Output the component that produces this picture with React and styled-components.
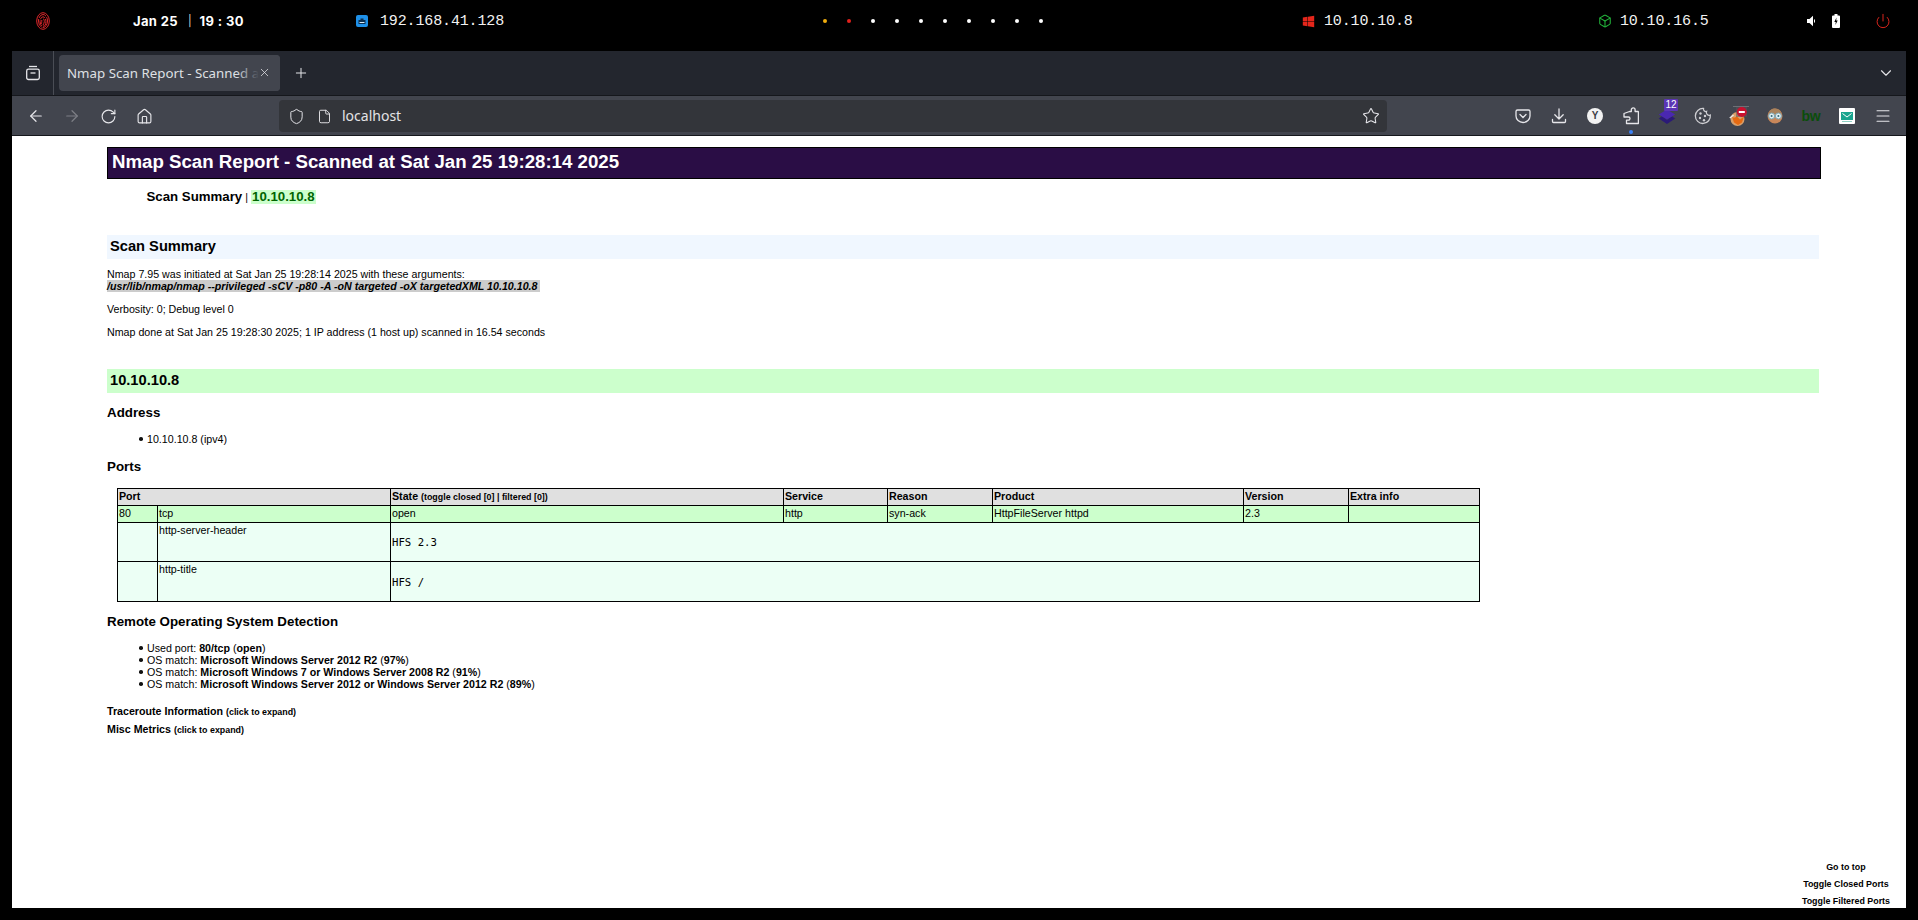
import React from "react";
import styled, { createGlobalStyle } from "styled-components";
import { ArrowLeft, ArrowRight, RotateCw, House, Shield, File, Star, Menu, ChevronDown, Plus, X, Box, Power } from "lucide-react";
import { FaWindows } from "react-icons/fa";

const Global = createGlobalStyle`
  html, body { margin: 0; padding: 0; background: #000; overflow: hidden; }
  * { box-sizing: border-box; }
`;

const Screen = styled.div`
  width: 1918px; height: 920px; background: #000; display: flex; flex-direction: column; overflow: hidden;
`;
const TopBar = styled.header`
  height: 51px; flex: none; display: flex; align-items: center; padding-bottom: 9px; color: #fff;
`;
const Segment = styled.div`
  flex: none; width: ${p => p.$w}px; display: flex; align-items: center; gap: ${p => p.$gap ?? 0}px; padding-left: ${p => p.$pl ?? 0}px;
`;
const DateText = styled.span`
  font: 700 13px/16px Inter, "Liberation Sans", sans-serif; letter-spacing: .35px; white-space: pre;
`;
const DateSep = styled.span`
  font: 400 11px/16px Inter, "Liberation Sans", sans-serif; margin: 0 8px 0 10px; color: #ddd;
`;
const Ip = styled.span`
  font: 400 15px/16px "Liberation Mono", monospace; letter-spacing: -.14px; color: #f2f2f2; padding-top: 1px;
`;
const Dots = styled.div`
  display: flex; gap: 20px; align-items: center;
`;
const Dot = styled.i`
  width: 4px; height: 4px; border-radius: 50%; background: ${p => p.$c || "#fff"}; display: block;
`;
const Window = styled.div`
  margin: 0 12px; height: 857px; display: flex; flex-direction: column; overflow: hidden; position: relative; background: #fff;
`;
const TabBar = styled.div`
  height: 45px; flex: none; background: #23262e; display: flex; align-items: center; color: #e4e4e8; position: relative; border-bottom: 1px solid #15171c;
`;
const SideBtn = styled.div`
  width: 42px; height: 44px; border-right: 1px solid #4a4d55; display: flex; align-items: center; justify-content: center; flex: none;
`;
const Tab = styled.div`
  margin-left: 5px; width: 221px; height: 36px; border-radius: 4px; background: #42454e; display: flex; align-items: center; padding-left: 8px; position: relative; flex: none;
  font: 400 13.3px/16px "Noto Sans", "Open Sans", sans-serif; color: #dfe0e4; overflow: hidden; white-space: nowrap;
`;
const TabFade = styled.span`
  position: absolute; right: 0; top: 0; bottom: 0; width: 44px; background: linear-gradient(90deg, rgba(66,69,78,0), #42454e 52%);
`;
const TabClose = styled.span`
  position: absolute; right: 9px; top: 11px; display: flex;
`;
const NewTab = styled.div`
  margin-left: 13px; display: flex; flex: none;
`;
const Spring = styled.div`flex: 1;`;
const RightChevron = styled.div`
  display: flex; margin-right: 11px;
`;
const NavBar = styled.div`
  height: 40px; flex: none; background: #42454e; display: flex; align-items: center; border-bottom: 1px solid #15171c; padding-top: 1px; color: #e6e6ea;
`;
const NavBtns = styled.div`
  width: 267px; flex: none; padding-left: 6px; display: flex; align-items: center;
`;
const NavBtn = styled.div`
  width: 36px; height: 32px; display: flex; align-items: center; justify-content: center;
`;
const UrlBar = styled.div`
  width: 1108px; flex: none; height: 32px; background: #33353a; border-radius: 4px; display: flex; align-items: center; padding-left: 9px; position: relative;
`;
const UrlText = styled.span`
  font: 400 14px/18px "Noto Sans", "Open Sans", sans-serif; color: #e3e3e6; margin-left: 10px;
`;
const UrlDocIcon = styled.span`
  margin-left: 12px; display: flex;
`;
const UrlStar = styled.span`
  margin-left: auto; margin-right: 7px; display: flex;
`;
const Tools = styled.div`
  margin-left: 118px; display: flex; align-items: center;
`;
const Tool = styled.div`
  width: 36px; height: 32px; flex: none; display: flex; align-items: center; justify-content: center; position: relative;
`;
const ToolBadge = styled.span`
  position: absolute; left: 15px; top: -1px; width: 14px; height: 12px; background: #5b35b5; color: #fff; font: 400 10px/12px "Liberation Sans", sans-serif; text-align: center; border-radius: 1px;
`;
const ToolDot = styled.span`
  position: absolute; left: 16px; bottom: -2px; width: 4px; height: 4px; border-radius: 50%; background: #3b82f6;
`;
const BwText = styled.span`
  font: 700 14px/14px "Liberation Sans", sans-serif; color: #0b4d0b; letter-spacing: -.2px;
`;
const YBadge = styled.span`
  width: 16px; height: 16px; border-radius: 50%; background: #f2f2f2; color: #3a3c44; font: 700 10px/16px "Liberation Sans", sans-serif; text-align: center;
`;

const Page = styled.main`
  flex: 1; background: #fff; padding: 11px 85px 0 95px; color: #000; position: relative; overflow: hidden;
  font: 400 10.67px/12px "Liberation Sans", Arial, sans-serif;
`;
const Title = styled.h1`
  margin: 0; height: 32px; background: #2a0d45; border: 1px solid #000; color: #fff; padding: 0 4px;
  font: 700 18.67px/28px "Liberation Sans", Arial, sans-serif; white-space: nowrap;
`;
const Menu2 = styled.div`
  margin: 11px 0 0 39.5px; padding-bottom: 1px; font: 400 10.67px/14px "Liberation Sans", Arial, sans-serif; display: flex; align-items: baseline; gap: 3px;
`;
const MenuLink = styled.span`
  font-weight: 700; font-size: 13.25px; line-height: 14px;
  ${p => p.$host && `background: #ccffcc; color: #006400; display: inline-block; padding: 0 1px 1px; line-height: 13px;`}
`;
const Bar = styled.h2`
  margin: ${p => p.$mt ?? 30}px 2px 0 0; height: 24px; padding-left: ${p => p.$pl ?? 3}px; background: ${p => p.$bg};
  font: 700 14.67px/23px "Liberation Sans", Arial, sans-serif;
`;
const Para = styled.p`
  margin: ${p => p.$mt ?? 11}px 0 0;
`;
const Args = styled.b`
  background: #ccc; font-style: italic; display: inline-block; padding-right: 2px;
`;
const Sub = styled.h3`
  margin: ${p => p.$mt ?? 12}px 0 0; font: 700 13.33px/16px "Liberation Sans", Arial, sans-serif;
`;
const List = styled.ul`
  margin: 12px 0 0; padding: 0 0 0 40px; line-height: 12px; list-style: none;
`;
const Item = styled.li`
  position: relative;
  &::before { content: ""; position: absolute; left: -8px; top: 4px; width: 3.5px; height: 3.5px; border-radius: 50%; background: #111; }
`;
const PortsTable = styled.table`
  margin: 13px 0 0 10px; border-collapse: collapse; table-layout: fixed; width: 1362px; border: 1px solid #000;
`;
const HeadRow = styled.tr`
  background: #e0e0e0; height: 17px;
`;
const Th = styled.th`
  border: 1px solid #000; text-align: left; padding: 0 1px; vertical-align: top; font: 700 10.67px/14px "Liberation Sans", Arial, sans-serif;
`;
const ThSmall = styled.span`
  font-size: 8.9px;
`;
const Tr = styled.tr`
  background: ${p => p.$bg}; height: ${p => p.$h}px;
`;
const Td = styled.td`
  border: 1px solid #000; padding: 0 1px; vertical-align: ${p => p.$mid ? "middle" : "top"}; font: 400 10.67px/14px "Liberation Sans", Arial, sans-serif;
`;
const Pre = styled.pre`
  margin: 0; font: 400 10.67px/14px "DejaVu Sans Mono", monospace; padding-top: 2px;
`;
const Expand = styled.div`
  margin-top: ${p => p.$mt}px; font: 700 10.67px/14px "Liberation Sans", Arial, sans-serif;
`;
const ExpandHint = styled.span`
  font-size: 8.9px;
`;
const Floating = styled.div`
  position: absolute; right: 16px; bottom: 0; display: flex; flex-direction: column; align-items: center; gap: 3px;
  font: 700 8.9px/14px "Liberation Sans", Arial, sans-serif; background: #fff;
`;

const Fingerprint = () => (
  <svg width="14" height="18" viewBox="0 0 14 18" fill="none" stroke="#e0282c" strokeWidth="1">
    <ellipse cx="7" cy="9" rx="6.300" ry="8.300" />
    <ellipse cx="7" cy="9" rx="4.500" ry="6.500" strokeDasharray="9 1" />
    <ellipse cx="7" cy="9.500" rx="2.900" ry="4.700" strokeDasharray="6 1" />
    <path d="M7 6.500c1 .500 1.300 2 1.300 3S7.800 12 7 13M5.800 8c0 2-.2 3-.5 4" />
  </svg>
);
const EthIcon = () => (
  <svg width="12" height="12" viewBox="0 0 12 12">
    <rect width="12" height="12" rx="2" fill="#1e90e8" />
    <path d="M2.500 9V5h2V3.500h3V5h2v4z" fill="#0d2f4f" />
    <path d="M3.500 7.500h5" stroke="#d8eefc" strokeWidth="1" />
  </svg>
);
const Speaker = () => (
  <svg width="9" height="12" viewBox="0 0 9 12" fill="#fff">
    <path d="M0 4h2.500L6 .800v10.400L2.500 8H0z" />
    <path d="M7 4a2.400 2.400 0 0 1 0 4z" />
  </svg>
);
const Battery = () => (
  <svg width="8" height="14" viewBox="0 0 8 14">
    <path d="M2.500 0h3v1.500H7a1 1 0 0 1 1 1V13a1 1 0 0 1-1 1H1a1 1 0 0 1-1-1V2.500a1 1 0 0 1 1-1h1.500z" fill="#fff" />
    <path d="M4.500 3.500 2.300 8h1.500l-.4 3L5.700 6.500H4.200z" fill="#000" />
  </svg>
);
const ArchiveIcon = () => (
  <svg width="16" height="16" viewBox="0 0 16 16" fill="none" stroke="#e6e6ea" strokeWidth="1.300">
    <path d="M4 1.500h8" />
    <rect x="1.700" y="4.200" width="12.600" height="10.300" rx="1.800" />
    <path d="M5.500 8h5" />
  </svg>
);
const Pocket = () => (
  <svg width="16" height="16" viewBox="0 0 16 16" fill="none" stroke="#e6e6ea" strokeWidth="1.300">
    <path d="M2.500 2h11A1.500 1.500 0 0 1 15 3.500V8a7 6.500 0 0 1-14 0V3.500A1.500 1.500 0 0 1 2.500 2z" />
    <path d="M5 6.500 8 9.500l3-3" strokeLinecap="round" />
  </svg>
);
const DownloadIcon = () => (
  <svg width="16" height="16" viewBox="0 0 16 16" fill="none" stroke="#e6e6ea" strokeWidth="1.300" strokeLinecap="round" strokeLinejoin="round">
    <path d="M8 1v9.500M3.800 6.800 8 11l4.200-4.200" />
    <path d="M1.500 11.500v2a1 1 0 0 0 1 1h11a1 1 0 0 0 1-1v-2" />
  </svg>
);
const Puzzle = () => (
  <svg width="16" height="18" viewBox="0 0 16 18" fill="none" stroke="#e6e6ea" strokeWidth="1.300">
    <path d="M6.500 4.500H8.300V2.800a1.900 1.900 0 0 1 3.800 0v1.700h2.900a.5.500 0 0 1 .4.500v11.500H3.500v-3.300H5.400a1.600 1.600 0 0 0 0-3.200H1V6.500l5.500-2z" strokeLinejoin="round" />
  </svg>
);
const Stack = () => (
  <svg width="18" height="18" viewBox="0 0 18 18">
    <path d="M9 17 .800 11.500 4 9.300l5 3.500 5-3.500 3.200 2.200z" fill="#2b1a78" />
    <path d="M9 12.500.800 7.500 9 2.500l8.200 5z" fill="#4a28b0" />
  </svg>
);
const CookieIcon = () => (
  <svg width="18" height="18" viewBox="0 0 18 18" fill="none" stroke="#cfcfd3" strokeWidth="1.300">
    <path d="M9.500 1.500a2.500 2.500 0 0 0 3 3 2.800 2.800 0 0 0 3.800 3.500A7.500 7.500 0 1 1 9.500 1.500z" />
    <g fill="#cfcfd3" stroke="none">
      <circle cx="6.500" cy="6.500" r="1.200" /><circle cx="11" cy="9" r="1.200" /><circle cx="6" cy="11" r="1.200" /><circle cx="10" cy="13.300" r="1.200" />
    </g>
  </svg>
);
const FoxBlock = () => (
  <svg width="20" height="22" viewBox="0 0 20 22">
    <circle cx="8.500" cy="14" r="7" fill="#d9a06a" />
    <path d="M3 11.500c2 2 3 1 5 0l3 3 4-3-2 6-4 2.500-4-2.500z" fill="#e66a12" />
    <path d="M.800 13 4.500 10" stroke="#e8e8e8" strokeWidth="1.500" />
    <rect x="4" y="1" width="16" height="1" fill="#6d6f75" />
    <rect x="7" y="2" width="11" height="10" fill="#55575c" opacity=".55" />
    <circle cx="12.800" cy="7" r="5" fill="#c8102e" />
    <rect x="9.800" y="6" width="6" height="2" fill="#fff" />
  </svg>
);
const Face = () => (
  <svg width="16" height="16" viewBox="0 0 16 16">
    <circle cx="8" cy="8" r="7.500" fill="#c8875a" />
    <path d="M1.500 6C2 2.500 5 .5 8 .5S14 2.500 14.500 6z" fill="#a9825c" />
    <circle cx="4.600" cy="8" r="3" fill="#dfeef2" stroke="#7fa6b3" />
    <circle cx="11.400" cy="8" r="3" fill="#dfeef2" stroke="#7fa6b3" />
    <circle cx="4.600" cy="8" r="1" fill="#3a6675" />
    <circle cx="11.400" cy="8" r="1" fill="#3a6675" />
  </svg>
);
const MailTile = () => (
  <svg width="16" height="16" viewBox="0 0 16 16">
    <rect width="16" height="16" rx="1" fill="#fff" />
    <rect x="2" y="4" width="12" height="8" fill="#1aa58f" />
    <path d="M3.500 5.500 8 9l4.500-3.500" fill="none" stroke="#fff" strokeWidth="1" />
    <rect x="3" y="13" width="10" height="1" fill="#8fcfc4" />
  </svg>
);

const stroke = 1.6;
const ports = [40, 233, 393, 104, 105, 251, 105, 131];

export default function App() {
  return (
    <Screen>
      <Global />
      <TopBar>
        <Segment $w={133} $pl={36}><Fingerprint /></Segment>
        <Segment $w={223}><DateText>Jan 25</DateText><DateSep>|</DateSep><DateText>19 : 30</DateText></Segment>
        <Segment $w={467} $gap={12}><EthIcon /><Ip>192.168.41.128</Ip></Segment>
        <Segment $w={479}><Dots>{["#f0ad0e", "#e3211c", "", "", "", "", "", "", "", ""].map((c, i) => <Dot key={i} $c={c} />)}</Dots></Segment>
        <Segment $w={296} $gap={9}><FaWindows size={13} color="#e5261b" /><Ip>10.10.10.8</Ip></Segment>
        <Segment $w={209} $gap={8}><Box size={14} color="#22b33a" strokeWidth={1.8} /><Ip>10.10.16.5</Ip></Segment>
        <Segment $w={25}><Speaker /></Segment>
        <Segment $w={43}><Battery /></Segment>
        <Segment $w={20}><Power size={16} color="#d8251c" strokeWidth={1.5} /></Segment>
      </TopBar>
      <Window>
        <TabBar>
          <SideBtn><ArchiveIcon /></SideBtn>
          <Tab>
            Nmap Scan Report - Scanned at
            <TabFade />
            <TabClose><X size={13} color="#e4e4e8" strokeWidth={1.4} /></TabClose>
          </Tab>
          <NewTab><Plus size={16} color="#e4e4e8" strokeWidth={1.5} /></NewTab>
          <Spring />
          <RightChevron><ChevronDown size={18} color="#e4e4e8" strokeWidth={1.5} /></RightChevron>
        </TabBar>
        <NavBar>
          <NavBtns>
            <NavBtn><ArrowLeft size={18} strokeWidth={stroke} /></NavBtn>
            <NavBtn><ArrowRight size={18} strokeWidth={stroke} color="#7d7f86" /></NavBtn>
            <NavBtn><RotateCw size={17} strokeWidth={stroke} /></NavBtn>
            <NavBtn><House size={17} strokeWidth={stroke} /></NavBtn>
          </NavBtns>
          <UrlBar>
            <Shield size={17} strokeWidth={1.4} />
            <UrlDocIcon><File size={15} strokeWidth={1.5} /></UrlDocIcon>
            <UrlText>localhost</UrlText>
            <UrlStar><Star size={18} strokeWidth={1.4} /></UrlStar>
          </UrlBar>
          <Tools>
            <Tool><Pocket /></Tool>
            <Tool><DownloadIcon /></Tool>
            <Tool><YBadge>Y</YBadge></Tool>
            <Tool><Puzzle /><ToolDot /></Tool>
            <Tool><Stack /><ToolBadge>12</ToolBadge></Tool>
            <Tool><CookieIcon /></Tool>
            <Tool><FoxBlock /></Tool>
            <Tool><Face /></Tool>
            <Tool><BwText>bw</BwText></Tool>
            <Tool><MailTile /></Tool>
            <Tool><Menu size={18} strokeWidth={1.4} /></Tool>
          </Tools>
        </NavBar>
        <Page>
          <Title>Nmap Scan Report - Scanned at Sat Jan 25 19:28:14 2025</Title>
          <Menu2><MenuLink>Scan Summary</MenuLink><span>|</span><MenuLink $host>10.10.10.8</MenuLink></Menu2>
          <Bar $bg="#f0f7ff">Scan Summary</Bar>
          <Para $mt={9}>Nmap 7.95 was initiated at Sat Jan 25 19:28:14 2025 with these arguments:<br /><Args>/usr/lib/nmap/nmap --privileged -sCV -p80 -A -oN targeted -oX targetedXML 10.10.10.8</Args></Para>
          <Para>Verbosity: 0; Debug level 0</Para>
          <Para $mt={11}>Nmap done at Sat Jan 25 19:28:30 2025; 1 IP address (1 host up) scanned in 16.54 seconds</Para>
          <Bar $bg="#ccffcc" $mt={31}>10.10.10.8</Bar>
          <Sub>Address</Sub>
          <List><Item>10.10.10.8 (ipv4)</Item></List>
          <Sub $mt={14}>Ports</Sub>
          <PortsTable>
            <colgroup>{ports.map((w, i) => <col key={i} width={w} />)}</colgroup>
            <thead>
              <HeadRow>
                <Th colSpan={2}>Port</Th>
                <Th>State <ThSmall>(toggle closed [0] | filtered [0])</ThSmall></Th>
                <Th>Service</Th><Th>Reason</Th><Th>Product</Th><Th>Version</Th><Th>Extra info</Th>
              </HeadRow>
            </thead>
            <tbody>
              <Tr $bg="#ccffcc" $h={17}>
                <Td>80</Td><Td>tcp</Td><Td>open</Td><Td>http</Td><Td>syn-ack</Td><Td>HttpFileServer httpd</Td><Td>2.3</Td><Td></Td>
              </Tr>
              <Tr $bg="#ecfff5" $h={39}>
                <Td></Td><Td>http-server-header</Td><Td $mid colSpan={6}><Pre>HFS 2.3</Pre></Td>
              </Tr>
              <Tr $bg="#ecfff5" $h={40}>
                <Td></Td><Td>http-title</Td><Td $mid colSpan={6}><Pre>HFS /</Pre></Td>
              </Tr>
            </tbody>
          </PortsTable>
          <Sub>Remote Operating System Detection</Sub>
          <List>
            <Item>Used port: <b>80/tcp</b> (<b>open</b>)</Item>
            <Item>OS match: <b>Microsoft Windows Server 2012 R2</b> (<b>97%</b>)</Item>
            <Item>OS match: <b>Microsoft Windows 7 or Windows Server 2008 R2</b> (<b>91%</b>)</Item>
            <Item>OS match: <b>Microsoft Windows Server 2012 or Windows Server 2012 R2</b> (<b>89%</b>)</Item>
          </List>
          <Expand $mt={14}>Traceroute Information <ExpandHint>(click to expand)</ExpandHint></Expand>
          <Expand $mt={3}>Misc Metrics <ExpandHint>(click to expand)</ExpandHint></Expand>
          <Floating>
            <span>Go to top</span>
            <span>Toggle Closed Ports</span>
            <span>Toggle Filtered Ports</span>
          </Floating>
        </Page>
      </Window>
    </Screen>
  );
}
